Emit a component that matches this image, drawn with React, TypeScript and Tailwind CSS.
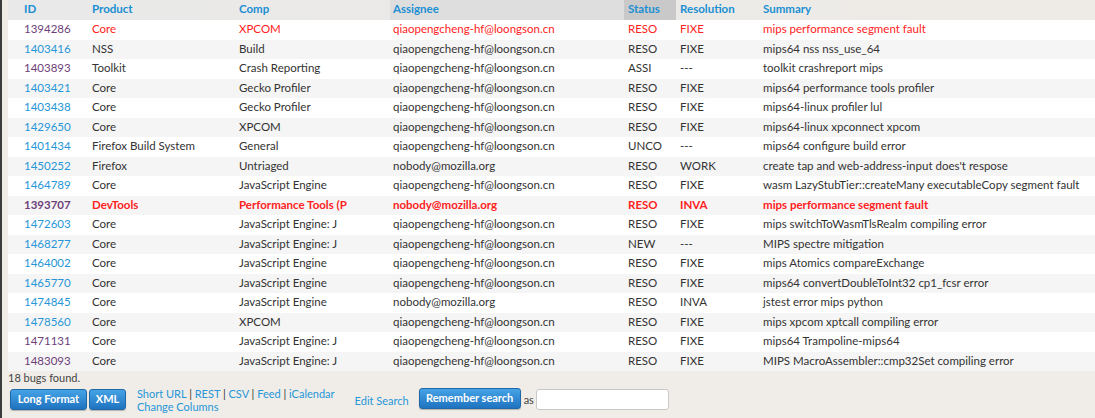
import React from "react";

type Row = {
  id: string;
  visited?: boolean;
  product: string;
  comp: string;
  assignee: string;
  status: string;
  res: string;
  summary: string;
  red?: boolean;
  bold?: boolean;
};

const Q = "qiaopengcheng-hf@loongson.cn";
const N = "nobody@mozilla.org";

const rows: Row[] = [
  { id: "1394286", visited: true, product: "Core", comp: "XPCOM", assignee: Q, status: "RESO", res: "FIXE", summary: "mips performance segment fault", red: true },
  { id: "1403416", product: "NSS", comp: "Build", assignee: Q, status: "RESO", res: "FIXE", summary: "mips64 nss nss_use_64" },
  { id: "1403893", visited: true, product: "Toolkit", comp: "Crash Reporting", assignee: Q, status: "ASSI", res: "---", summary: "toolkit crashreport mips" },
  { id: "1403421", product: "Core", comp: "Gecko Profiler", assignee: Q, status: "RESO", res: "FIXE", summary: "mips64 performance tools profiler" },
  { id: "1403438", product: "Core", comp: "Gecko Profiler", assignee: Q, status: "RESO", res: "FIXE", summary: "mips64-linux profiler lul" },
  { id: "1429650", product: "Core", comp: "XPCOM", assignee: Q, status: "RESO", res: "FIXE", summary: "mips64-linux xpconnect xpcom" },
  { id: "1401434", product: "Firefox Build System", comp: "General", assignee: Q, status: "UNCO", res: "---", summary: "mips64 configure build error" },
  { id: "1450252", product: "Firefox", comp: "Untriaged", assignee: N, status: "RESO", res: "WORK", summary: "create tap and web-address-input does't respose" },
  { id: "1464789", product: "Core", comp: "JavaScript Engine", assignee: Q, status: "RESO", res: "FIXE", summary: "wasm LazyStubTier::createMany executableCopy segment fault" },
  { id: "1393707", visited: true, product: "DevTools", comp: "Performance Tools (P", assignee: N, status: "RESO", res: "INVA", summary: "mips performance segment fault", red: true, bold: true },
  { id: "1472603", product: "Core", comp: "JavaScript Engine: J", assignee: Q, status: "RESO", res: "FIXE", summary: "mips switchToWasmTlsRealm compiling error" },
  { id: "1468277", product: "Core", comp: "JavaScript Engine: J", assignee: Q, status: "NEW", res: "---", summary: "MIPS spectre mitigation" },
  { id: "1464002", product: "Core", comp: "JavaScript Engine", assignee: Q, status: "RESO", res: "FIXE", summary: "mips Atomics compareExchange" },
  { id: "1465770", product: "Core", comp: "JavaScript Engine", assignee: Q, status: "RESO", res: "FIXE", summary: "mips64 convertDoubleToInt32 cp1_fcsr error" },
  { id: "1474845", product: "Core", comp: "JavaScript Engine", assignee: N, status: "RESO", res: "INVA", summary: "jstest error mips python" },
  { id: "1478560", product: "Core", comp: "XPCOM", assignee: Q, status: "RESO", res: "FIXE", summary: "mips xpcom xptcall compiling error" },
  { id: "1471131", visited: true, product: "Core", comp: "JavaScript Engine: J", assignee: Q, status: "RESO", res: "FIXE", summary: "mips64 Trampoline-mips64" },
  { id: "1483093", visited: true, product: "Core", comp: "JavaScript Engine: J", assignee: Q, status: "RESO", res: "FIXE", summary: "MIPS MacroAssembler::cmp32Set compiling error" },
];

const grid = "grid grid-cols-[81px_147px_154px_234px_52px_84px_1fr] items-center";

function Btn({ children, w }: { children: React.ReactNode; w: string }) {
  return (
    <button
      className={`${w} h-[21px] whitespace-nowrap rounded-[3px] border border-[#1f68a8] bg-gradient-to-b from-[#45a3e6] to-[#1f73bf] text-[11px] font-bold text-white shadow-[0_1px_1px_rgba(0,0,0,0.25)]`}
    >
      {children}
    </button>
  );
}

export default function App() {
  return (
    <div
      className="relative h-[418px] w-[1095px] overflow-hidden bg-[#f0ede8] text-[11.5px] text-[#333]"
      style={{ fontFamily: "Lato, 'Open Sans', sans-serif" }}
    >
      <div className="absolute left-0 top-0 h-full w-[2px] bg-[#3b3b3b]" />
      <div className="pl-[8px]">
        {/* header */}
        <div className={`${grid} h-[20px] bg-gradient-to-r from-[#e9e9e9] to-[#eeebe6] font-bold text-[#1b8fd2]`}>
          <div className="pb-[2px] pl-[16px]">ID</div>
          <div className="pb-[2px] pl-[3px]">Product</div>
          <div className="pb-[2px] pl-[3px]">Comp</div>
          <div className="flex h-full items-center bg-[#dedede] pb-[2px] pl-[3px]">Assignee</div>
          <div className="flex h-full items-center bg-[#c9c9c9] pb-[2px] pl-[4px]">Status</div>
          <div className="pb-[2px] pl-[4px]">Resolution</div>
          <div className="pb-[2px] pl-[3px]">Summary</div>
        </div>
        {rows.map((r, i) => {
          const bg = i % 2 === 0 ? "bg-white" : "bg-[#f5f5f5]";
          const txt = r.red ? "text-[#f22]" : "text-[#333]";
          const idc = r.visited ? "text-[#6f3f7a]" : "text-[#2696d8]";
          return (
            <div key={r.id} className={`${grid} h-[19.5px] whitespace-nowrap pb-[2px] ${bg} ${txt} ${r.bold ? "font-bold" : ""}`}>
              <div className={`pl-[16px] ${idc}`}>{r.id}</div>
              <div className="pl-[3px]">{r.product}</div>
              <div className="pl-[3px]">{r.comp}</div>
              <div className="pl-[3px]">{r.assignee}</div>
              <div className="pl-[4px]">{r.status}</div>
              <div className="pl-[4px]">{r.res}</div>
              <div className="pl-[3px]">{r.summary}</div>
            </div>
          );
        })}
        <div className="text-[11px] leading-[14px] text-[#444]">18 bugs found.</div>
        <div className="mt-[4px] flex items-start pl-[2px]">
          <div className="flex gap-[2px]">
            <Btn w="w-[77px]">Long Format</Btn>
            <Btn w="w-[37px]">XML</Btn>
          </div>
          <div className="ml-[11px] mt-[-2px] whitespace-nowrap text-[11px] leading-[13px] text-[#2696d8]">
            <div>
              Short URL <span className="text-[#333]">|</span> REST <span className="text-[#333]">|</span> CSV{" "}
              <span className="text-[#333]">|</span> Feed <span className="text-[#333]">|</span> iCalendar
            </div>
            <div>Change Columns</div>
          </div>
          <div className="ml-[20px] mt-[4px] whitespace-nowrap text-[11px] text-[#2696d8]">Edit Search</div>
          <div className="ml-[10px] mt-[-1px]">
            <Btn w="w-[102px]">Remember search</Btn>
          </div>
          <div className="ml-[3px] mt-[3px] text-[11px] text-[#444]">as</div>
          <div className="ml-[2px] h-[21px] w-[133px] rounded-[3px] border border-[#c8c8c8] bg-white" />
        </div>
      </div>
    </div>
  );
}
